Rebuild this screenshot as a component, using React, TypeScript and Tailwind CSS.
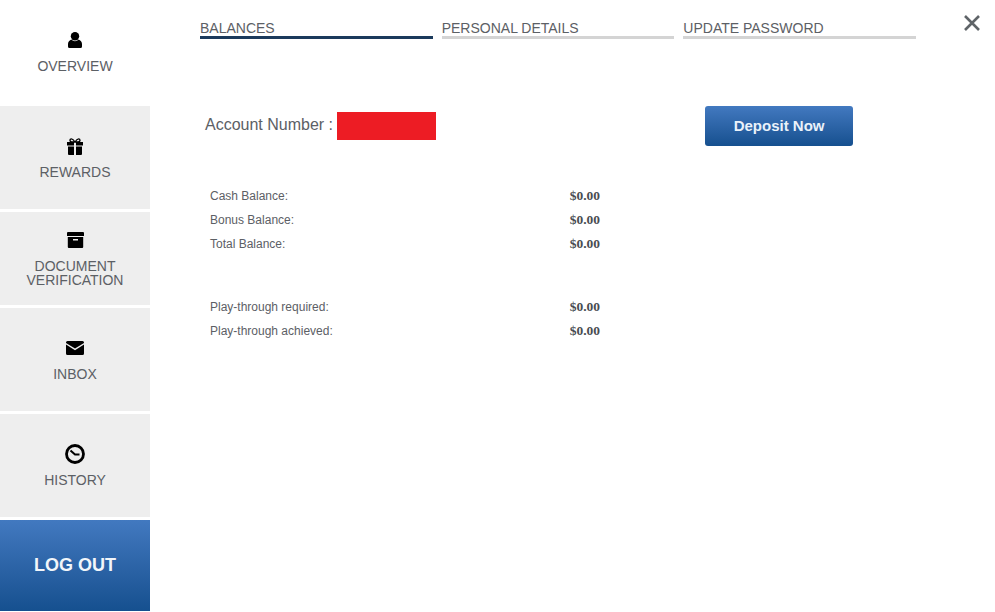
const UserIcon = () => (
  <svg width="14" height="16" viewBox="0 0 14 16">
    <circle cx="7" cy="4.200" r="4.200" fill="#000" />
    <path fill="#000" d="M3.500 7.500C4.500 8.700 5.600 9.200 7 9.200s2.500-.5 3.500-1.700C12.600 8.200 14 9.800 14 12v2.500a1.500 1.500 0 0 1-1.500 1.500h-11A1.500 1.500 0 0 1 0 14.500V12c0-2.200 1.400-3.800 3.500-4.500z" />
  </svg>
);

const GiftIcon = () => (
  <svg width="16" height="17" viewBox="0 0 16 17">
    <path fill="none" stroke="#000" strokeWidth="1.300" d="M8 4C6.800 2 5.500 .8 4.500 .8 3.400 .8 3 1.600 3 2.300 3 3.400 4 4 5 4zM8 4c1.200-2 2.500-3.200 3.500-3.200 1.100 0 1.500.8 1.500 1.500 0 1.100-1 1.700-2 1.700z" />
    <path fill="#000" d="M0 4h7v3.500H0zM9 4h7v3.500H9zM1 8.500h6V17H2a1 1 0 0 1-1-1zM9 8.500h6V16a1 1 0 0 1-1 1H9z" />
  </svg>
);

const ArchiveIcon = () => (
  <svg width="17" height="16" viewBox="0 0 17 16">
    <path fill="#000" d="M1 0h15a1 1 0 0 1 1 1v3H0V1a1 1 0 0 1 1-1z" />
    <path fill="#000" fillRule="evenodd" d="M.8 5h15.400v10a1 1 0 0 1-1 1H1.800a1 1 0 0 1-1-1zM6 7v1.500h5V7z" />
  </svg>
);

const MailIcon = () => (
  <svg width="18" height="14" viewBox="0 0 18 14">
    <path fill="#000" d="M1.500 0h15A1.500 1.500 0 0 1 18 1.500v.4L9 7.600 0 1.900v-.4A1.500 1.500 0 0 1 1.500 0z" />
    <path fill="#000" d="M0 3.600l9 5.700 9-5.700v8.900a1.500 1.500 0 0 1-1.500 1.500h-15A1.500 1.500 0 0 1 0 12.500z" />
  </svg>
);

const ClockIcon = () => (
  <svg width="20" height="20" viewBox="0 0 20 20" fill="none" stroke="#000">
    <circle cx="10" cy="10" r="8.500" strokeWidth="2.800" />
    <path d="M5.500 6.500l4.500 4h4.500" strokeWidth="2" />
  </svg>
);

const menu = [
  { label: 'REWARDS', icon: <GiftIcon />, h: 'h-[103px]', pt: 'pt-[32px]', gap: 'mt-[10px]' },
  { label: 'DOCUMENT\nVERIFICATION', icon: <ArchiveIcon />, h: 'h-[93px]', pt: 'pt-[20px]', gap: 'mt-[11px]' },
  { label: 'INBOX', icon: <MailIcon />, h: 'h-[103px]', pt: 'pt-[33px]', gap: 'mt-[12px]' },
  { label: 'HISTORY', icon: <ClockIcon />, h: 'h-[103px]', pt: 'pt-[30px]', gap: 'mt-[9px]' },
];

const tabs = ['BALANCES', 'PERSONAL DETAILS', 'UPDATE PASSWORD'];

const balances = [
  { label: 'Cash Balance:', value: '$0.00' },
  { label: 'Bonus Balance:', value: '$0.00' },
  { label: 'Total Balance:', value: '$0.00' },
];

const playThrough = [
  { label: 'Play-through required:', value: '$0.00' },
  { label: 'Play-through achieved:', value: '$0.00' },
];

const Row = ({ label, value }: { label: string; value: string }) => (
  <div className="flex h-[24px] w-[390px] items-center justify-between">
    <span className="text-[12px] text-[#5c6065]">{label}</span>
    <span className="font-['Liberation_Serif',serif] text-[13.500px] font-bold text-[#4a4d52]">{value}</span>
  </div>
);

export default function App() {
  return (
    <div className="flex h-[612px] w-[995px] overflow-hidden bg-white font-['Liberation_Sans',sans-serif]">
      <aside className="flex w-[150px] shrink-0 flex-col">
        <div className="flex h-[106px] flex-col items-center pt-[32px]">
          <UserIcon />
          <span className="mt-[10px] text-[14px] leading-[16px] text-[#5c6065]">OVERVIEW</span>
        </div>
        <div className="flex flex-col gap-[3px]">
          {menu.map((item) => (
            <div key={item.label} className={`flex flex-col items-center bg-[#eeeeee] ${item.h} ${item.pt}`}>
              {item.icon}
              <div className={`whitespace-pre-line text-center text-[14px] leading-[14px] text-[#5c6065] ${item.gap}`}>
                {item.label}
              </div>
            </div>
          ))}
          <div className="flex h-[91px] items-center justify-center bg-gradient-to-b from-[#4279c0] to-[#15508f] text-[18px] font-bold text-[#f2f6fa]">
            LOG OUT
          </div>
        </div>
      </aside>

      <main className="relative flex-1 pl-[50px] pt-[20px]">
        <div className="flex w-[716px] gap-[9px]">
          {tabs.map((tab, i) => (
            <div
              key={tab}
              className={`w-[233px] border-b-[3px] text-[14px] leading-[16px] text-[#5c6065] ${i === 0 ? 'border-[#1b3a5c]' : 'border-[#d4d4d4]'}`}
            >
              {tab}
            </div>
          ))}
        </div>

        <button className="absolute right-[14px] top-[14px] text-[#5f6468]">
          <svg width="18" height="18" viewBox="0 0 18 18" stroke="currentColor" strokeWidth="2.600">
            <path d="M2 2l14 14M16 2L2 16" />
          </svg>
        </button>

        <div className="mt-[67px] flex items-start">
          <div className="flex items-start pl-[5px] pt-[5px]">
            <span className="text-[16px] leading-[28px] text-[#5c6065]">Account Number :</span>
            <div className="ml-[4px] mt-[1px] h-[28px] w-[99px] bg-[#ed1c24]" />
          </div>
          <button className="ml-[269px] h-[40px] w-[148px] rounded-[3px] bg-gradient-to-b from-[#4279c0] to-[#15508f] text-[15px] font-bold text-[#eaf2fa]">
            Deposit Now
          </button>
        </div>

        <div className="mt-[38px] pl-[10px]">
          {balances.map((row) => (
            <Row key={row.label} {...row} />
          ))}
          <div className="h-[39px]" />
          {playThrough.map((row) => (
            <Row key={row.label} {...row} />
          ))}
        </div>
      </main>
    </div>
  );
}
